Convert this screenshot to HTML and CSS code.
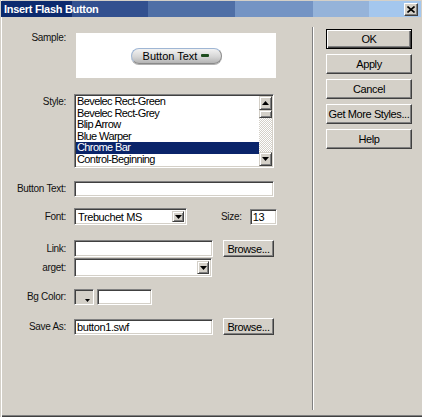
FILE: index.html
```html
<!DOCTYPE html>
<html lang="en">
<head>
    <meta charset="UTF-8">
    <title>Insert Flash Button</title>
    <link rel="stylesheet" href="styles.css">
</head>
<body>

<div class="window">
    <div class="titlebar">
        <span class="title">Insert Flash Button</span>
        <button class="close" type="button">
            <svg width="8" height="7" viewBox="0 0 8 7"><path d="M0.5 0.5 L7.5 6.5 M7.5 0.5 L0.5 6.5" stroke="#000" stroke-width="1.6" fill="none"/></svg>
        </button>
    </div>

    <div class="main">
        <div class="form">
            <div class="row row-sample">
                <label class="lbl lbl-top">Sample:</label>
                <div class="sample-box">
                    <div class="pill"><span>Button Text</span><span class="pill-dash"></span></div>
                </div>
            </div>

            <div class="row row-style">
                <label class="lbl lbl-top lbl-style">Style:</label>
                <div class="listbox">
                    <ul class="items">
                        <li>Bevelec Rect-Green</li>
                        <li>Bevelec Rect-Grey</li>
                        <li>Blip Arrow</li>
                        <li>Blue Warper</li>
                        <li class="selected">Chrome Bar</li>
                        <li>Control-Beginning</li>
                    </ul>
                    <div class="scrollbar">
                        <div class="sb-btn"><svg width="7" height="4" viewBox="0 0 7 4"><polygon points="3.5,0 7,4 0,4" fill="#000"/></svg></div>
                        <div class="sb-thumb"></div>
                        <div class="sb-track"></div>
                        <div class="sb-btn"><svg width="7" height="4" viewBox="0 0 7 4"><polygon points="0,0 7,0 3.5,4" fill="#000"/></svg></div>
                    </div>
                </div>
            </div>

            <div class="row row-text">
                <label class="lbl" for="btnText">Button Text:</label>
                <input class="field field-wide" type="text" id="btnText">
            </div>

            <div class="row row-font">
                <label class="lbl">Font:</label>
                <div class="combo combo-font">
                    <span class="combo-value">Trebuchet MS</span>
                    <span class="combo-btn"><svg width="7" height="4" viewBox="0 0 7 4"><polygon points="0,0 7,0 3.5,4" fill="#000"/></svg></span>
                </div>
                <label class="lbl-inline" for="fontSize">Size:</label>
                <input class="field field-size" type="text" id="fontSize" value="13">
            </div>

            <div class="row row-link">
                <label class="lbl" for="link">Link:</label>
                <input class="field field-mid" type="text" id="link">
                <button class="btn btn-browse" type="button">Browse...</button>
            </div>

            <div class="row row-target">
                <label class="lbl">arget:</label>
                <div class="combo combo-target">
                    <span class="combo-value"></span>
                    <span class="combo-btn"><svg width="7" height="4" viewBox="0 0 7 4"><polygon points="0,0 7,0 3.5,4" fill="#000"/></svg></span>
                </div>
            </div>

            <div class="row row-bg">
                <label class="lbl">Bg Color:</label>
                <div class="swatch">
                    <svg class="swatch-arrow" width="5" height="3" viewBox="0 0 5 3"><polygon points="0,0 5,0 2.5,3" fill="#000"/></svg>
                </div>
                <input class="field field-color" type="text">
            </div>

            <div class="row row-save">
                <label class="lbl" for="saveAs">Save As:</label>
                <input class="field field-mid" type="text" id="saveAs" value="button1.swf">
                <button class="btn btn-browse" type="button">Browse...</button>
            </div>
        </div>

        <div class="sep"></div>

        <div class="actions">
            <button class="btn btn-default" type="button">OK</button>
            <button class="btn" type="button">Apply</button>
            <button class="btn" type="button">Cancel</button>
            <button class="btn" type="button">Get More Styles...</button>
            <button class="btn" type="button">Help</button>
        </div>
    </div>
</div>

</body>
</html>
```

FILE: styles.css
```css
body {
    margin: 0;
    background: #d4d0c8;
    font-family: "Liberation Sans", Arial, sans-serif;
    font-size: 11px;
    color: #000;
}
.window {
    width: 422px;
    height: 417px;
    box-sizing: border-box;
    padding: 1px 1px 0 1px;
    display: flex;
    flex-direction: column;
    box-shadow: inset 1px 0 #d4d0c8, inset 2px 0 #fff, inset 0 -1px #404040, inset 0 -2px #808080;
}
.titlebar {
    height: 16px;
    display: flex;
    align-items: center;
    justify-content: space-between;
    background: linear-gradient(to right,
        #0c2a6e 0 71px, #32508f 71px 147px, #4f6fa6 147px 234px,
        #7494c4 234px 312px, #95b3d9 312px 368px, #a4c7ee 368px);
}
.title {
    color: #fff;
    font-weight: bold;
    font-size: 11px;
    letter-spacing: -0.3px;
    padding-left: 3px;
}
.close {
    width: 14px;
    height: 13px;
    margin-right: 3px;
    padding: 0;
    display: flex;
    align-items: center;
    justify-content: center;
    background: #d4d0c8;
    border: 1px solid;
    border-color: #fff #404040 #404040 #fff;
    box-shadow: inset -1px -1px #808080;
    box-sizing: border-box;
}
.main {
    display: flex;
    flex: 1;
}
.form {
    width: 311px;
}
.sep {
    width: 0;
    height: 383px;
    margin-top: 10px;
    border-left: 1px solid #808080;
    border-right: 1px solid #fff;
}
.actions {
    display: flex;
    flex-direction: column;
    gap: 5px;
    padding: 12px 0 0 12px;
}

/* rows */
.row {
    display: flex;
    align-items: center;
}
.row-sample { margin-top: 16px; align-items: flex-start; }
.row-style  { margin-top: 16px; align-items: flex-start; }
.row-text   { margin-top: 13px; }
.row-font   { margin-top: 11px; }
.row-link   { margin-top: 15px; }
.row-target { margin-top: 1px; }
.row-bg     { margin-top: 12px; }
.row-save   { margin-top: 13px; }

.lbl {
    width: 65px;
    margin-right: 8px;
    text-align: right;
    font-size: 10px;
    letter-spacing: -0.3px;
    line-height: 12px;
    color: #111;
}
.lbl-top { margin-top: -1px; }
.lbl-style { margin-top: 2px; }
.lbl-inline {
    font-size: 10px;
    letter-spacing: -0.3px;
    margin-left: 34px;
    margin-right: 8px;
    color: #111;
}

/* sample preview */
.sample-box {
    width: 200px;
    height: 45px;
    margin-left: 2px;
    background: #fff;
    display: flex;
    align-items: center;
    justify-content: center;
}
.pill {
    width: 91px;
    height: 16px;
    box-sizing: border-box;
    border-radius: 8px;
    border: 1px solid #9fb6d4;
    border-bottom-color: #8a8a8a;
    border-right-color: #8a8a8a;
    background: linear-gradient(#f2f2f2, #d6d6d6 55%, #b4b4b4);
    box-shadow: 0 1px 0 #b0b0b0;
    display: flex;
    align-items: center;
    justify-content: center;
    gap: 4px;
    font-size: 11px;
}
.pill-dash {
    width: 8px;
    height: 3px;
    background: #1e4d1e;
    border-radius: 1px;
}

/* listbox */
.listbox {
    width: 200px;
    height: 74px;
    box-sizing: border-box;
    display: flex;
    background: #fff;
    border: 1px solid;
    border-color: #808080 #fff #fff #808080;
    box-shadow: inset 1px 1px #404040, inset -1px -1px #d4d0c8;
    padding: 1px;
}
.items {
    list-style: none;
    margin: 0;
    padding: 0;
    flex: 1;
    overflow: hidden;
}
.items li {
    height: 11.6px;
    line-height: 11.6px;
    padding-left: 1px;
    letter-spacing: -0.6px;
    white-space: nowrap;
}
.items li.selected {
    background: #0a246a;
    color: #fff;
}
.scrollbar {
    width: 13px;
    display: flex;
    flex-direction: column;
}
.sb-btn, .sb-thumb {
    background: #d4d0c8;
    border: 1px solid;
    border-color: #d4d0c8 #404040 #404040 #d4d0c8;
    box-shadow: inset 1px 1px #fff, inset -1px -1px #808080;
    box-sizing: border-box;
}
.sb-btn {
    height: 14px;
    display: flex;
    align-items: center;
    justify-content: center;
}
.sb-thumb {
    height: 8px;
}
.sb-track {
    flex: 1;
    background: repeating-conic-gradient(#fff 0 25%, #d4d0c8 0 50%) 0 0 / 2px 2px;
}

/* fields */
.field {
    height: 16px;
    box-sizing: border-box;
    margin: 0;
    padding: 0 2px;
    background: #fff;
    border: 1px solid;
    border-color: #808080 #fff #fff #808080;
    box-shadow: inset 1px 1px #404040, inset -1px -1px #d4d0c8;
    font-family: inherit;
    font-size: 11px;
    letter-spacing: -0.4px;
    outline: none;
}
.field-wide { width: 200px; }
.field-mid { width: 139px; height: 17px; }
.row-save .field-mid { height: 16px; }
.field-size { width: 27px; }
.field-color { width: 55px; margin-left: 3px; }

.combo {
    box-sizing: border-box;
    display: flex;
    align-items: stretch;
    background: #fff;
    border: 1px solid;
    border-color: #808080 #fff #fff #808080;
    box-shadow: inset 1px 1px #404040, inset -1px -1px #d4d0c8;
    padding: 2px;
}
.combo-font { width: 113px; height: 17px; }
.combo-target { width: 138px; height: 19px; }
.combo-value {
    flex: 1;
    line-height: 13px;
    padding-left: 1px;
    letter-spacing: -0.4px;
    white-space: nowrap;
}
.combo-btn {
    width: 12px;
    box-sizing: border-box;
    display: flex;
    align-items: center;
    justify-content: center;
    background: #d4d0c8;
    border: 1px solid;
    border-color: #d4d0c8 #404040 #404040 #d4d0c8;
    box-shadow: inset 1px 1px #fff, inset -1px -1px #808080;
}

.swatch {
    width: 20px;
    height: 16px;
    box-sizing: border-box;
    position: relative;
    background: #d4d0c8;
    border: 1px solid;
    border-color: #808080 #fff #fff #808080;
    box-shadow: inset 1px 1px #404040, inset -1px -1px #d4d0c8;
}
.swatch-arrow {
    position: absolute;
    right: 3px;
    bottom: 2px;
}

/* buttons */
.btn {
    width: 86px;
    height: 20px;
    box-sizing: border-box;
    padding: 0;
    background: #d4d0c8;
    border: 1px solid;
    border-color: #fff #404040 #404040 #fff;
    box-shadow: inset -1px -1px #808080;
    font-family: inherit;
    font-size: 11px;
    letter-spacing: -0.4px;
    color: #000;
}
.btn-default {
    border-color: #000;
    box-shadow: inset 1px 1px #fff, inset -1px -1px #404040, inset -2px -2px #808080;
}
.btn-browse {
    width: 51px;
    height: 17px;
    margin-left: 10px;
}
```
